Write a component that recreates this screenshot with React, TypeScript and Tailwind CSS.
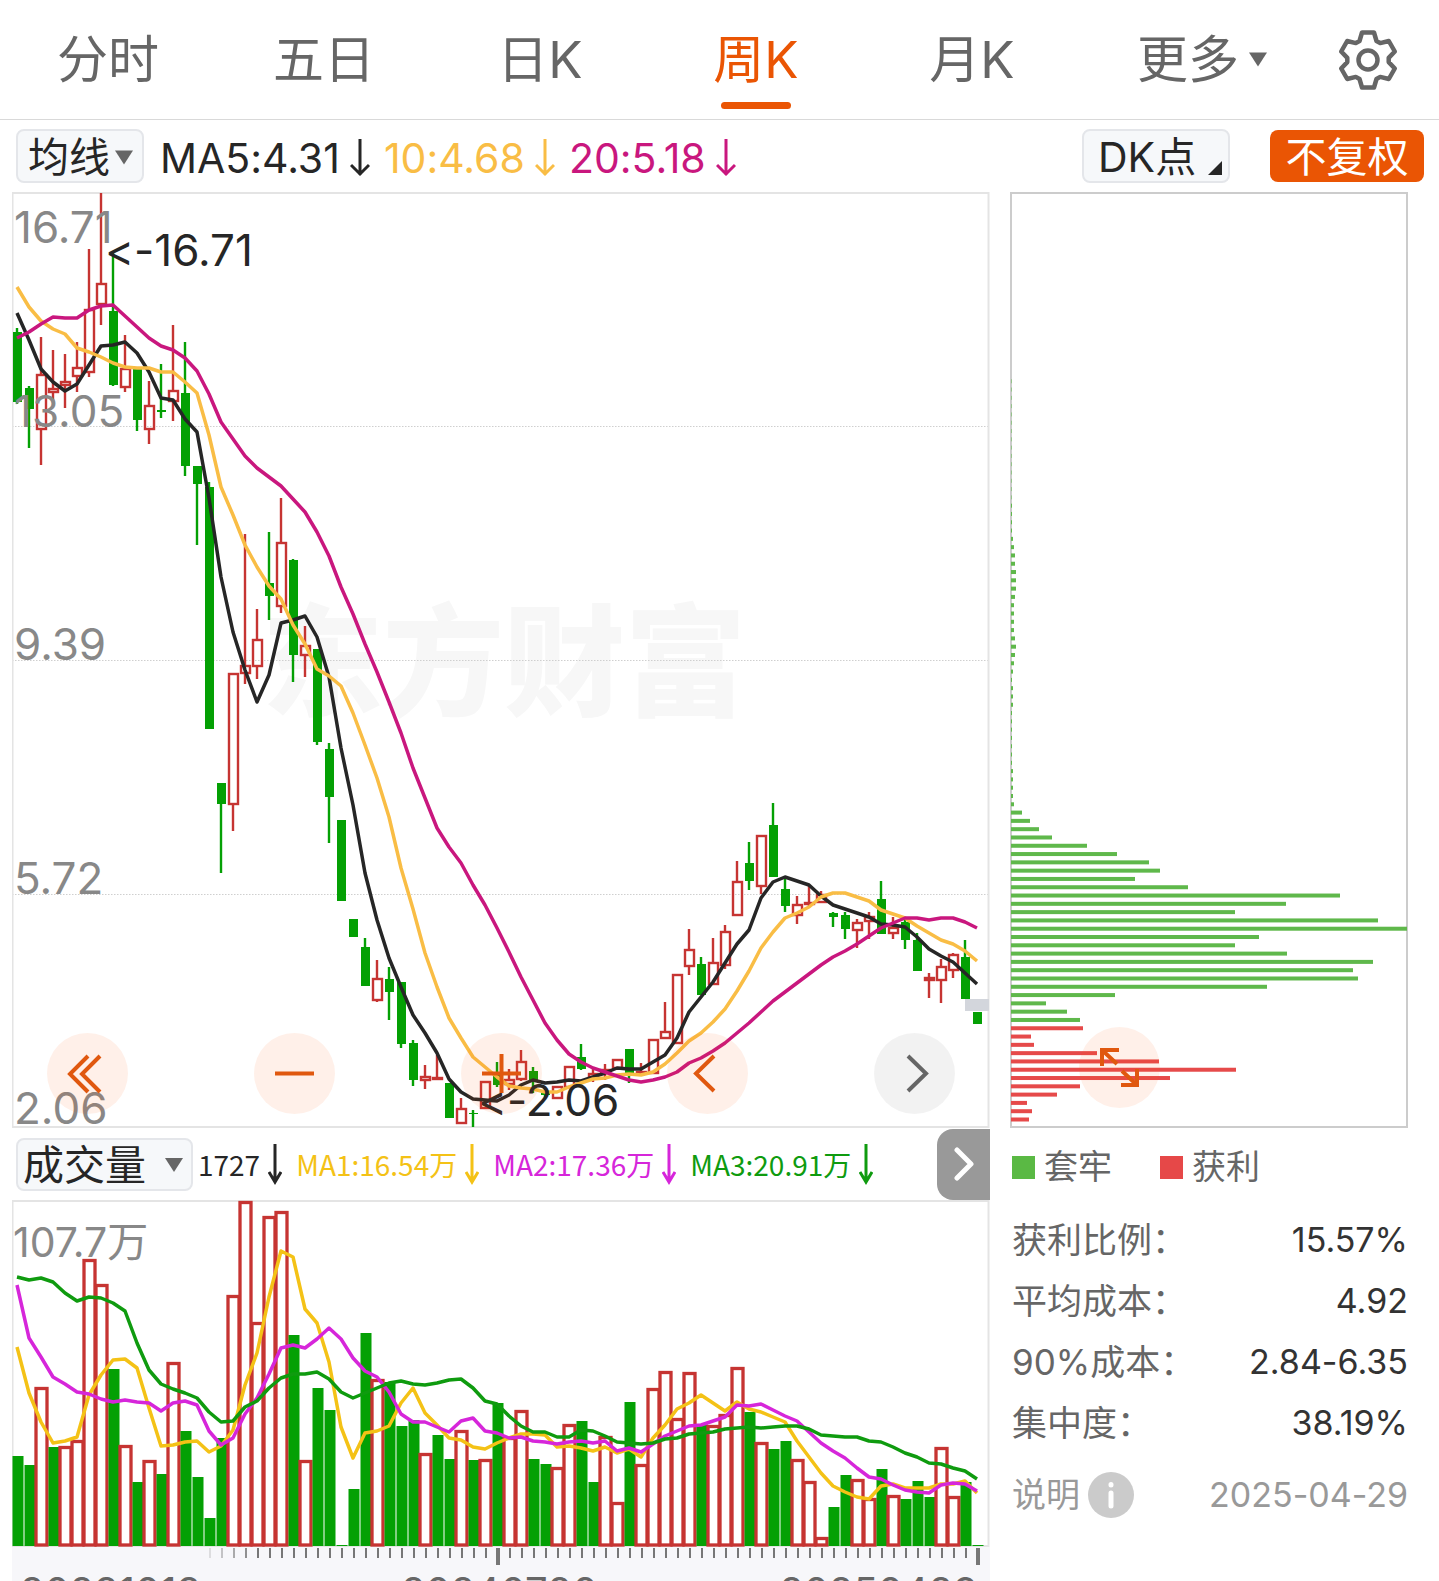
import type { ReactNode } from "react";

const RED = "#c63432";
const GREEN = "#04a004";

const STEP = 12;
const xAt = (i: number) => 17 + i * STEP;

/* [rising?, high, body top, body bottom, low] for every week */
const candles: [number, number, number, number, number][] = [
  [0, 328, 332, 402, 404], [0, 386, 388, 409, 448], [1, 337, 374, 429, 465], [1, 350, 388, 392, 403],
  [1, 354, 381, 385, 408], [1, 342, 367, 376, 392], [1, 249, 309, 372, 377], [1, 193, 283, 304, 325],
  [0, 253, 311, 385, 386], [1, 335, 368, 387, 392], [0, 369, 369, 420, 431], [1, 381, 405, 429, 444],
  [0, 364, 410, 412, 418], [1, 325, 390, 401, 421], [0, 342, 393, 466, 476], [0, 466, 466, 484, 545],
  [0, 482, 487, 729, 729], [0, 783, 783, 804, 873], [1, 673, 673, 804, 831], [1, 534, 665, 673, 684],
  [1, 609, 639, 666, 679], [0, 532, 583, 596, 620], [1, 498, 542, 606, 613], [0, 559, 560, 655, 682],
  [1, 626, 645, 655, 677], [0, 649, 649, 742, 745], [0, 743, 749, 797, 843], [0, 820, 820, 901, 901],
  [0, 919, 919, 937, 937], [0, 938, 947, 986, 986], [1, 960, 978, 1000, 1002], [0, 967, 979, 992, 1020],
  [0, 982, 982, 1044, 1048], [0, 1040, 1043, 1080, 1086], [1, 1065, 1076, 1080, 1089], [1, 1055, 1077, 1078, 1080],
  [0, 1083, 1083, 1118, 1118], [1, 1098, 1108, 1123, 1123], [0, 1110, 1113, 1114, 1127], [1, 1081, 1081, 1108, 1108],
  [0, 1062, 1074, 1085, 1087], [1, 1069, 1079, 1084, 1090], [1, 1050, 1061, 1079, 1081], [0, 1067, 1071, 1080, 1093],
  [0, 1088, 1093, 1095, 1098], [1, 1086, 1086, 1098, 1098], [1, 1066, 1066, 1087, 1087], [0, 1044, 1057, 1069, 1070],
  [1, 1068, 1073, 1077, 1082], [1, 1064, 1069, 1073, 1080], [1, 1059, 1059, 1068, 1068], [0, 1049, 1049, 1075, 1083],
  [1, 1063, 1071, 1073, 1074], [1, 1039, 1039, 1073, 1073], [1, 1002, 1031, 1038, 1039], [1, 974, 974, 1043, 1043],
  [1, 929, 949, 966, 975], [0, 957, 964, 995, 995], [1, 938, 962, 984, 984], [1, 925, 931, 965, 969],
  [1, 861, 881, 915, 915], [0, 842, 863, 881, 890], [1, 835, 835, 886, 894], [0, 803, 825, 877, 877],
  [0, 878, 889, 906, 912], [1, 896, 904, 915, 924], [1, 886, 902, 903, 907], [1, 891, 894, 902, 902],
  [0, 912, 913, 917, 927], [0, 912, 915, 929, 939], [1, 919, 922, 930, 948], [1, 912, 916, 921, 939],
  [0, 881, 899, 934, 934], [1, 917, 927, 933, 939], [0, 920, 922, 940, 949], [0, 933, 940, 971, 971],
  [1, 973, 977, 980, 998], [1, 959, 966, 980, 1003], [1, 953, 954, 970, 978], [0, 940, 957, 999, 999],
  [0, 1012, 1012, 1024, 1024],
];

const ma5 = [313, 340, 369, 382, 391, 384, 365, 346, 345, 342, 353, 372, 398, 400, 419, 432, 498, 577, 632, 670, 702, 675, 623, 620, 616, 637, 677, 748, 805, 873, 920, 958, 987, 1015, 1033, 1053, 1079, 1092, 1099, 1100, 1101, 1095, 1085, 1080, 1083, 1082, 1080, 1081, 1077, 1073, 1068, 1069, 1069, 1062, 1055, 1038, 1012, 997, 982, 963, 944, 930, 898, 882, 877, 881, 885, 896, 905, 909, 913, 917, 924, 925, 927, 937, 949, 956, 962, 973, 984];
const ma10 = [287, 307, 321, 329, 334, 348, 352, 357, 363, 367, 368, 368, 372, 372, 382, 393, 435, 487, 515, 545, 567, 586, 599, 625, 644, 669, 676, 686, 713, 745, 778, 817, 868, 909, 953, 987, 1018, 1038, 1057, 1067, 1077, 1086, 1088, 1089, 1092, 1092, 1087, 1083, 1079, 1078, 1075, 1074, 1075, 1072, 1064, 1053, 1041, 1033, 1022, 1009, 991, 971, 948, 932, 918, 913, 907, 897, 893, 893, 897, 901, 910, 914, 918, 926, 933, 940, 944, 951, 961];
const ma20 = [338, 332, 324, 317, 318, 318, 310, 306, 305, 316, 327, 338, 346, 350, 358, 371, 394, 422, 439, 456, 468, 477, 486, 499, 512, 532, 556, 587, 614, 644, 672, 702, 733, 768, 798, 828, 847, 863, 885, 905, 928, 952, 977, 1000, 1023, 1040, 1054, 1062, 1068, 1072, 1076, 1080, 1082, 1080, 1077, 1072, 1063, 1058, 1051, 1043, 1033, 1023, 1012, 1001, 992, 983, 974, 965, 957, 951, 944, 936, 928, 923, 918, 918, 920, 918, 918, 922, 928];

/* [rising?, bar top] */
const volumes: [number, number][] = [
  [0, 1456], [0, 1465], [1, 1387], [0, 1447], [1, 1446], [1, 1440], [1, 1259], [1, 1284], [0, 1369], [1, 1445],
  [0, 1482], [1, 1460], [0, 1474], [1, 1362], [0, 1431], [0, 1477], [0, 1518], [0, 1438], [1, 1295], [1, 1201],
  [1, 1322], [1, 1216], [1, 1211], [0, 1335], [1, 1460], [0, 1388], [0, 1410], [0, 1545], [0, 1489], [0, 1333],
  [1, 1379], [0, 1382], [0, 1426], [0, 1420], [1, 1453], [0, 1435], [0, 1459], [1, 1430], [0, 1460], [1, 1459],
  [0, 1403], [1, 1437], [1, 1410], [0, 1459], [0, 1464], [1, 1467], [1, 1424], [0, 1421], [0, 1482], [1, 1436],
  [1, 1502], [0, 1402], [1, 1464], [1, 1388], [1, 1371], [1, 1418], [1, 1372], [0, 1424], [1, 1425], [1, 1414],
  [1, 1367], [0, 1412], [1, 1442], [0, 1449], [0, 1441], [1, 1459], [1, 1481], [1, 1537], [0, 1507], [0, 1475],
  [1, 1479], [1, 1498], [0, 1469], [1, 1495], [0, 1499], [0, 1481], [0, 1497], [1, 1447], [1, 1496], [0, 1482],
  [0, 1545],
];

const vma1 = [1347, 1393, 1422, 1443, 1441, 1437, 1395, 1375, 1360, 1359, 1368, 1408, 1446, 1445, 1442, 1441, 1452, 1446, 1430, 1385, 1353, 1297, 1251, 1257, 1309, 1323, 1362, 1427, 1458, 1433, 1431, 1426, 1403, 1388, 1413, 1425, 1438, 1440, 1447, 1449, 1443, 1438, 1434, 1434, 1435, 1447, 1446, 1448, 1451, 1447, 1453, 1449, 1457, 1438, 1425, 1409, 1403, 1395, 1403, 1411, 1402, 1409, 1412, 1417, 1422, 1441, 1457, 1473, 1486, 1492, 1497, 1499, 1486, 1484, 1488, 1488, 1488, 1484, 1484, 1481, 1493];
const vma2 = [1285, 1338, 1357, 1377, 1384, 1392, 1394, 1399, 1402, 1400, 1402, 1403, 1411, 1403, 1401, 1405, 1431, 1445, 1438, 1414, 1398, 1374, 1348, 1345, 1348, 1339, 1328, 1339, 1358, 1371, 1377, 1392, 1414, 1422, 1422, 1427, 1432, 1421, 1418, 1431, 1433, 1438, 1437, 1441, 1442, 1444, 1442, 1441, 1443, 1441, 1451, 1448, 1452, 1444, 1436, 1431, 1426, 1425, 1421, 1417, 1405, 1406, 1404, 1410, 1416, 1421, 1432, 1443, 1451, 1458, 1468, 1477, 1479, 1485, 1490, 1492, 1493, 1485, 1483, 1484, 1491];
const vma3 = [1277, 1280, 1278, 1282, 1293, 1301, 1297, 1298, 1303, 1311, 1343, 1370, 1384, 1389, 1393, 1398, 1412, 1422, 1421, 1407, 1401, 1388, 1378, 1374, 1374, 1372, 1379, 1392, 1398, 1393, 1388, 1383, 1381, 1384, 1385, 1383, 1380, 1379, 1388, 1401, 1404, 1416, 1426, 1432, 1432, 1437, 1437, 1430, 1431, 1436, 1442, 1443, 1444, 1443, 1439, 1438, 1434, 1433, 1432, 1429, 1428, 1427, 1428, 1427, 1426, 1426, 1429, 1435, 1436, 1437, 1437, 1441, 1442, 1447, 1453, 1457, 1463, 1464, 1468, 1471, 1479];

/* Cost distribution, from the highest price down to the lowest */
const chipsHigh = [1, 1, 1, 1, 2, 3, 4, 4, 5, 5, 5, 4, 3, 3, 3, 3, 4, 5, 4, 3, 2, 1, 2, 2, 2, 1, 1, 1, 1, 1, 1, 1, 2, 2, 2, 2, 3];
const chipsTrapped = [11, 19, 28, 41, 76, 106, 138, 149, 124, 177, 329, 275, 224, 367, 396, 248, 224, 276, 362, 342, 347, 256, 104, 35, 56, 69];
const chipsProfit = [72, 20, 23, 86, 148, 225, 159, 69, 46, 16, 21, 18];
const chips = [...Array<number>(15).fill(0.5), ...chipsHigh, ...chipsTrapped, ...chipsProfit];
const profitStart = chips.length - chipsProfit.length;

const points = (ys: number[]) => ys.map((y, i) => `${xAt(i)},${y}`).join(" ");

function Line({ ys, color }: { ys: number[]; color: string }) {
  return <polyline points={points(ys)} fill="none" stroke={color} strokeWidth={3.5} strokeLinejoin="round" />;
}

function Caret({ className }: { className: string }) {
  return (
    <svg viewBox="0 0 18 14" className={className} fill="#666" aria-hidden="true">
      <path d="M0 0h18L9 14z" />
    </svg>
  );
}

function DownArrow({ narrow = false }: { narrow?: boolean }) {
  return narrow ? (
    <svg viewBox="0 0 14 42" className="h-[42px] w-[14px] shrink-0" fill="none" stroke="currentColor" strokeWidth={3} aria-hidden="true">
      <path d="M7 1v38M1 29l6 10 6-10" />
    </svg>
  ) : (
    <svg viewBox="0 0 20 38" className="h-[38px] w-5 shrink-0" fill="none" stroke="currentColor" strokeWidth={3} aria-hidden="true">
      <path d="M10 0v36M1 26l9 9 9-9" />
    </svg>
  );
}

function Tabs() {
  const tabs = ["分时", "五日", "日K", "周K", "月K", "更多"];
  return (
    <nav className="flex h-[120px] border-b border-[#d9d9d9] text-[51px] leading-[60px] text-[#666]">
      {tabs.map((tab) => (
        <button
          key={tab}
          type="button"
          className={
            tab === "周K"
              ? "relative flex flex-[216] items-center justify-center text-[#ea5504]"
              : "flex flex-[216] items-center justify-center"
          }
        >
          <span className="relative">
            {tab}
            {tab === "更多" && <Caret className="absolute top-[22px] left-full ml-[10px] h-[15px] w-[18px]" />}
          </span>
          {tab === "周K" && <span className="absolute bottom-[10px] h-[7px] w-[70px] rounded-full bg-[#ea5504]" />}
        </button>
      ))}
      <button type="button" aria-label="设置" className="flex flex-[143] items-center justify-center">
        <svg viewBox="0 0 60 60" className="size-[60px]" fill="none" stroke="#666" strokeWidth={4.5} strokeLinejoin="round">
          <path d="M24 2.500H36L38.500 11 42.200 13.100 50.800 11 56.800 21.500 50.700 27.900V32.100L56.800 38.500 50.800 49 42.200 46.900 38.500 49 36 57.500H24L21.500 49 17.800 46.900 9.200 49 3.200 38.500 9.300 32.100V27.900L3.200 21.500 9.200 11 17.800 13.100 21.500 11z" />
          <circle cx="30" cy="30" r="9.500" />
        </svg>
      </button>
    </nav>
  );
}

function AverageBar() {
  return (
    <div className="flex h-[72px] items-center pr-[15px] pl-4 text-[41px] leading-[48px]">
      <button type="button" className="flex h-[54px] w-[128px] items-center gap-[5px] rounded-lg border-2 border-[#e4e6ea] bg-[#f6f8fa] pt-[2px] pl-[10px] text-[#262626]">
        均线
        <Caret className="h-[15px] w-[18px]" />
      </button>
      <div className="ml-4 flex items-center gap-[14px] pt-1">
        <span className="flex items-center gap-[10px] text-[#262626]">MA5:4.31<DownArrow /></span>
        <span className="flex items-center gap-[10px] text-[#f9bd45]">10:4.68<DownArrow /></span>
        <span className="flex items-center gap-[10px] text-[#c9177e]">20:5.18<DownArrow /></span>
      </div>
      <button type="button" className="relative ml-auto flex h-[54px] w-[148px] items-center rounded-lg border-2 border-[#e4e6ea] bg-[#f6f8fa] pt-[2px] pl-[14px] text-[#262626]">
        DK点
        <svg viewBox="0 0 14 14" className="absolute right-[6px] bottom-[6px] size-[14px]" fill="#262626" aria-hidden="true">
          <path d="M14 0v14H0z" />
        </svg>
      </button>
      <button type="button" className="ml-10 h-[52px] w-[154px] rounded-lg bg-[#ea5504] pt-[2px] text-white">不复权</button>
    </div>
  );
}

function RoundButton({ label, muted = false, children }: { label: string; muted?: boolean; children: ReactNode }) {
  return (
    <button
      type="button"
      aria-label={label}
      className={muted ? "size-[81px] rounded-full bg-black/5 text-[#666]" : "size-[81px] rounded-full bg-[#ff5a10]/9 text-[#e0580f]"}
    >
      <svg viewBox="0 0 81 81" className="size-full" fill="none" stroke="currentColor" strokeWidth={4} aria-hidden="true">
        {children}
      </svg>
    </button>
  );
}

const priceLabels: [string, number][] = [["16.71", 243], ["13.05", 427], ["9.39", 660], ["5.72", 894], ["2.06", 1124]];

function PriceChart() {
  return (
    <section className="relative">
      <svg viewBox="12 192 978 936" className="block h-auto w-full" role="img" aria-label="周K线">
        <text x="262" y="706" fontSize="121" fontWeight="900" fill="#f7f7f7">东方财富</text>
        {[426.5, 660.5, 894.5].map((y) => (
          <line key={y} x1="12" x2="989" y1={y} y2={y} stroke="#cfcfcf" strokeDasharray="1.500 1.500" />
        ))}
        <rect x="12.500" y="193" width="976" height="934" fill="none" stroke="#e4e4e4" strokeWidth="2" />
        {candles.map(([up, high, top, bottom, low], i) => {
          const x = xAt(i);
          const color = up ? RED : GREEN;
          return (
            <g key={i} stroke={color} strokeWidth="2.400">
              {high < top && <line x1={x} x2={x} y1={high} y2={top} />}
              {low > bottom && <line x1={x} x2={x} y1={bottom} y2={low} />}
              {up ? (
                <rect x={x - 4} y={top + 1} width="9" height={Math.max(bottom - top - 1, 1)} fill="none" />
              ) : (
                <rect x={x - 4} y={top} width="9" height={bottom - top} fill={color} stroke="none" />
              )}
            </g>
          );
        })}
        <rect x="965" y="999" width="24" height="12" fill="#d3d6dc" />
        <Line ys={ma5} color="#262626" />
        <Line ys={ma10} color="#f9bd45" />
        <Line ys={ma20} color="#c9177e" />
        <g fontSize="44" fill="#888">
          {priceLabels.map(([text, y]) => (
            <text key={text} x="14" y={y}>{text}</text>
          ))}
        </g>
        <g fontSize="44" fill="#262626">
          <text x="105" y="266">&lt;-16.71</text>
          <text x="478" y="1116">&lt;-2.06</text>
        </g>
      </svg>
      <div className="absolute inset-x-0 bottom-[14px] flex justify-between px-[35px]">
        <RoundButton label="最早"><path d="M41 23L23 41l18 18M53 23L35 41l18 18" /></RoundButton>
        <RoundButton label="缩小"><path d="M21 40.500h39" /></RoundButton>
        <RoundButton label="放大"><path d="M21 40.500h39M40.500 21v39" /></RoundButton>
        <RoundButton label="向左"><path d="M47 23L29 40.500 47 58" /></RoundButton>
        <RoundButton label="向右" muted><path d="M34 23l18 17.500L34 58" /></RoundButton>
      </div>
    </section>
  );
}

function VolumeBar() {
  return (
    <div className="flex h-[72px] items-center pl-1">
      <button type="button" className="flex h-[53px] w-[177px] shrink-0 items-center justify-between rounded-lg border-2 border-[#e4e6ea] bg-[#f6f8fa] pt-[2px] pr-2 pl-[5px] text-[41px] leading-[48px] text-[#262626]">
        成交量
        <Caret className="h-[14px] w-[18px]" />
      </button>
      <div className="ml-[5px] flex items-center gap-[14px] font-['Noto_Sans_CJK_SC',sans-serif] text-[28px] leading-[48px] whitespace-nowrap">
        <span className="flex items-center gap-2 text-[#262626]">1727<DownArrow narrow /></span>
        <span className="flex items-center gap-2 text-[#f4c216]">MA1:16.54万<DownArrow narrow /></span>
        <span className="flex items-center gap-2 text-[#d626da]">MA2:17.36万<DownArrow narrow /></span>
        <span className="flex items-center gap-2 text-[#0f9b0f]">MA3:20.91万<DownArrow narrow /></span>
      </div>
      <button type="button" aria-label="下一指标" className="ml-auto flex h-[71px] w-[53px] shrink-0 items-center justify-center rounded-l-2xl bg-[#999]">
        <svg viewBox="0 0 20 34" className="h-[34px] w-5" fill="none" stroke="#fff" strokeWidth={5} strokeLinecap="round" strokeLinejoin="round" aria-hidden="true">
          <path d="M3 3l14 14L3 31" />
        </svg>
      </button>
    </div>
  );
}

function VolumeChart() {
  return (
    <svg viewBox="12 1200 978 347" className="block h-auto w-full" role="img" aria-label="成交量">
      <rect x="12.500" y="1201" width="976" height="345" fill="none" stroke="#e4e4e4" strokeWidth="2" />
      <text x="13" y="1257" fontSize="41" fill="#888">107.7万</text>
      {volumes.map(([up, top], i) =>
        up ? (
          <rect key={i} x={xAt(i) - 5} y={top + 1.5} width="11" height={1543.5 - top} fill="#fff" stroke={RED} strokeWidth="3.300" />
        ) : (
          <rect key={i} x={xAt(i) - 4.5} y={top} width="11" height={1546 - top} fill={GREEN} />
        ),
      )}
      <Line ys={vma1} color="#f4c216" />
      <Line ys={vma2} color="#d626da" />
      <Line ys={vma3} color="#0f9b0f" />
    </svg>
  );
}

function TimeAxis() {
  return (
    <div className="h-[34px] overflow-hidden bg-[#f7f7fa] text-[#666]">
      <svg viewBox="12 1547 978 19" className="block h-auto w-full" stroke="#777" strokeWidth="2" aria-hidden="true">
        {Array.from({ length: 65 }, (_, k) => {
          const x = 210 + k * STEP;
          const major = k === 24 || k === 64;
          return (
            <line key={k} x1={x} x2={x} y1="1548" y2={major ? 1565 : 1558} strokeWidth={major ? 4 : 2} opacity={Math.min(1, 0.2 + k * 0.2)} />
          );
        })}
      </svg>
      <div className="grid grid-cols-3 px-2 pt-[2px] pr-3 text-[40px] leading-[48px]">
        <span>20231013</span>
        <span className="text-center">20240726</span>
        <span className="text-right">20250429</span>
      </div>
    </div>
  );
}

function ChipChart() {
  const pitch = 8.295;
  return (
    <section className="relative">
      <svg viewBox="1010 192 398 936" className="block h-auto w-full" role="img" aria-label="筹码分布">
        <rect x="1011" y="193" width="396" height="934" fill="none" stroke="#ccc" strokeWidth="2" />
        {chips.map((w, i) => (
          <rect
            key={i}
            x="1011"
            y={1117.5 - (chips.length - 1 - i) * pitch}
            width={w}
            height="4"
            fill={i >= profitStart ? "#e64a4a" : "#5fb84b"}
          />
        ))}
      </svg>
      <div className="absolute bottom-[14px] left-[69px]">
        <RoundButton label="展开">
          <path d="M23 39V23h17M23 23l15 14M43 44l15 14M58 42v16H42" />
        </RoundButton>
      </div>
    </section>
  );
}

const stats = [
  ["获利比例：", "15.57%"],
  ["平均成本：", "4.92"],
  ["90%成本：", "2.84-6.35"],
  ["集中度：", "38.19%"],
];

function ChipStats() {
  return (
    <section className="pl-[2px] text-[35px] leading-[60px] text-[#666]">
      <div className="flex h-[78px] items-center text-[34px]">
        <span className="mr-[9px] size-[23px] bg-[#5ab944]" />
        套牢
        <span className="mr-[9px] ml-12 size-[23px] bg-[#e64848]" />
        获利
      </div>
      <dl className="pt-[3px]">
        {stats.map(([name, value]) => (
          <div key={name} className="flex h-[61px] items-center justify-between">
            <dt>{name}</dt>
            <dd className="text-[34px] text-[#333]">{value}</dd>
          </div>
        ))}
      </dl>
      <div className="mt-3 flex h-[60px] items-center text-[34px] text-[#999]">
        <span>说明</span>
        <button type="button" aria-label="说明" className="ml-2">
          <svg viewBox="0 0 46 46" className="size-[46px]" aria-hidden="true">
            <circle cx="23" cy="23" r="23" fill="#cbcbcb" />
            <path d="M23 12.500v.5M23 21v13" stroke="#fff" strokeWidth="5" strokeLinecap="round" />
          </svg>
        </button>
        <time dateTime="2025-04-29" className="ml-auto">2025-04-29</time>
      </div>
    </section>
  );
}

export default function App() {
  return (
    <main className="bg-white font-['Inter','Noto_Sans_CJK_SC',sans-serif] [font-feature-settings:'calt'_0]">
      <Tabs />
      <AverageBar />
      <div className="flex gap-5 pr-[31px] pl-3">
        <div className="min-w-0 flex-[978]">
          <PriceChart />
          <VolumeBar />
          <VolumeChart />
          <TimeAxis />
        </div>
        <div className="min-w-0 flex-[398]">
          <ChipChart />
          <ChipStats />
        </div>
      </div>
    </main>
  );
}
